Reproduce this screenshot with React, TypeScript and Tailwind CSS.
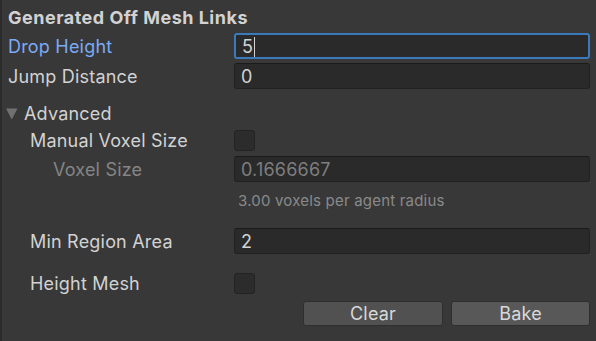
import React from 'react'

const font = { fontFamily: 'Inter, "Noto Sans", sans-serif' }

function Field({ value, focused, disabled }: { value: string; focused?: boolean; disabled?: boolean }) {
  return (
    <div
      className={
        'flex-1 h-[26px] rounded-[3px] flex items-center pl-[6px] pt-[1px] bg-[#2a2a2a] border ' +
        (focused ? 'border-[#3a79bb] border-2 pl-[5px]' : 'border-[#212121] border-t-[#1b1b1b]')
      }
    >
      <span className={disabled ? 'text-[#7e7e7e]' : 'text-[#d2d2d2]'}>{value}</span>
      {focused && <span className="w-px h-[20px] bg-[#d2d2d2] ml-[1px]" />}
    </div>
  )
}

function Checkbox() {
  return <div className="w-[21px] h-[21px] rounded-[3px] bg-[#2c2c2c] border border-[#232323]" />
}

function Row({ label, indent, className, labelClass, children }: {
  label: string
  indent: string
  className?: string
  labelClass?: string
  children: React.ReactNode
}) {
  return (
    <div className={'flex items-center h-[26px] ' + (className || '')}>
      <div className={'w-[226px] shrink-0 pt-[1px] ' + indent + ' ' + (labelClass || 'text-[#d2d2d2]')}>{label}</div>
      {children}
    </div>
  )
}

export default function App() {
  return (
    <div style={font} className="w-[596px] h-[341px] bg-[#383838] border-l-2 border-[#2b2b2b] text-[18px] tracking-[0.2px] leading-none overflow-hidden">
      <div className="pl-[6px] pr-[6px] pt-[4px]">
        <div className="h-[26px] pt-[1px] flex items-center font-bold tracking-[0.5px] text-[#d2d2d2]">Generated Off Mesh Links</div>

        <Row label="Drop Height" indent="" labelClass="text-[#7baaf5]" className="mt-[3px]">
          <Field value="5" focused />
        </Row>
        <Row label="Jump Distance" indent="" className="mt-[4px]">
          <Field value="0" />
        </Row>

        <div className="h-[26px] pt-[1px] mt-[11px] flex items-center -ml-[2px] text-[#d2d2d2]">
          <svg width="12" height="12" viewBox="0 0 12 12" className="mr-[6px] mt-[1px]">
            <path d="M0 0.5 L11.5 0.5 L5.75 11.5 Z" fill="#707070" />
          </svg>
          Advanced
        </div>

        <Row label="Manual Voxel Size" indent="pl-[22px]" className="mt-[1px]">
          <Checkbox />
        </Row>
        <Row label="Voxel Size" indent="pl-[45px]" labelClass="text-[#858585]" className="mt-[3px]">
          <Field value="0.1666667" disabled />
        </Row>
        <div className="flex items-center h-[24px] mt-[6px]">
          <div className="w-[226px] shrink-0" />
          <span className="pl-[4px] text-[15px] text-[#8a8a8a]">3.00 voxels per agent radius</span>
        </div>

        <Row label="Min Region Area" indent="pl-[22px]" className="mt-[16px]">
          <Field value="2" />
        </Row>
        <Row label="Height Mesh" indent="pl-[22px]" className="mt-[16px]">
          <Checkbox />
        </Row>

        <div className="flex justify-end gap-[8px] mt-[5px]">
          <button className="w-[140px] h-[25px] rounded-[3px] bg-[#515151] border border-[#2f2f2f] text-[#d8d8d8] flex items-center justify-center">
            Clear
          </button>
          <button className="w-[139px] h-[25px] rounded-[3px] bg-[#585858] border border-[#2f2f2f] text-[#d8d8d8] flex items-center justify-center">
            Bake
          </button>
        </div>
      </div>
    </div>
  )
}
